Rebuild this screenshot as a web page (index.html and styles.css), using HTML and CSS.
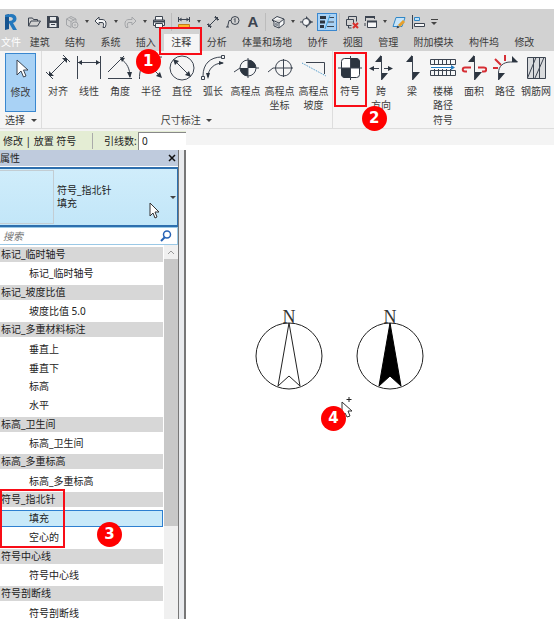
FILE: index.html
```html
<!DOCTYPE html>
<html lang="zh-CN">
<head>
<meta charset="utf-8">
<title>Revit</title>
<link rel="stylesheet" href="styles.css">
</head>
<body>
<div class="app">
  <header class="chrome">
    <div class="quick">
      <button class="logo" aria-label="Revit"><svg width="14" height="18" viewBox="0 0 14 18"><path d="M1 2l4-1v15l-4 1z" fill="#17548f"/><path d="M1 2l6-1c7 0 7 8 2 9l4 7H9L5 10V8c5 0 5-4 1-4H1z" fill="#2378bd"/></svg></button>
      <button class="q slim" aria-label="打开"><svg width="14" height="14" viewBox="0 0 14 14"><path d="M1.500 11V3h4l1 1.500h4V6M1.500 11L4 6h9.500L10.500 11z" class="ln"/></svg></button>
      <button class="q slim" aria-label="保存"><svg width="14" height="14" viewBox="0 0 14 14"><path d="M1 1h10.500L13 2.500V13H1z" fill="#3c4450"/><path d="M4 2h6v3.500H4zM3.500 8h7v4h-7z" fill="#e6e8ea"/><path d="M5 9.500h4" class="ln"/></svg></button>
      <button class="q" aria-label="同步"><svg width="14" height="14" viewBox="0 0 14 14"><path d="M1.500 4L6 1.500 11 4v3M1.500 4v6L6 12.500V6.500L1.500 4M6 6.500L11 4M4 2.500l5 2.500" class="pale"/><circle cx="10" cy="10" r="3" class="pale"/><path d="M9 10h2" class="pale"/></svg></button>
      <button class="more" aria-label="更多"></button>
      <button class="q" aria-label="放弃"><svg width="14" height="14" viewBox="0 0 14 14"><path d="M1 6l4-4v2.500h3c4 0 5 4 3 8h-2c1-3 1-5-1-5H5V10z" class="ln light"/></svg></button>
      <button class="more" aria-label="更多"></button>
      <button class="q" aria-label="重做"><svg width="14" height="14" viewBox="0 0 14 14"><path d="M13 6L9 2v2.500H6c-4 0-5 4-3 8h2c-1-3-1-5 1-5h3V10z" class="pale"/></svg></button>
      <button class="more" aria-label="更多"></button>
      <button class="q" aria-label="打印"><svg width="14" height="14" viewBox="0 0 14 14"><path d="M3.500 5V1.500h7V5M3.500 10.500h-2V5h11v5.500h-2M3.500 8.500h7v4h-7z" class="ln light"/><path d="M2 6.500h10" stroke="#3c4450" stroke-width="2"/></svg></button>
      <span class="sep"></span>
      <button class="q" aria-label="测量"><svg width="14" height="14" viewBox="0 0 14 14"><path d="M1.500 2v5M12.500 2v5M2 4.500h10" class="ln"/><path d="M4.500 2.500l-2.500 2 2.500 2zM9.500 2.500l2.500 2-2.500 2z" fill="#3c4450"/><path d="M1.500 9.500h11v3h-11z" fill="#ffb52b" stroke="#c07c18"/></svg></button>
      <button class="more" aria-label="更多"></button>
      <button class="q" aria-label="对齐尺寸标注"><svg width="14" height="14" viewBox="0 0 14 14"><path d="M3 11l8-8M1 9l4 4M9 1l4 4" class="ln"/><path d="M2 12V8l4 4zM12 2H8l4 4z" fill="#3c4450"/></svg></button>
      <button class="q" aria-label="按类别标记"><svg width="14" height="14" viewBox="0 0 14 14"><circle cx="9" cy="5.500" r="4" class="ln"/><path d="M5 5.500H3L1.500 12M8 4.500l1-1v4M0 12h3" class="ln"/></svg></button>
      <button class="q letter" aria-label="文字">A</button>
      <span class="sep"></span>
      <button class="q" aria-label="三维视图"><svg width="14" height="14" viewBox="0 0 14 14"><path d="M1 5l5-3.500L13 4v5l-5 4-5-2V7zM1 5l7 3 5-4M8 8v5" class="ln light"/><path d="M4 7.500l3 1v3l-3-1z" fill="#8d949c"/></svg></button>
      <button class="more" aria-label="更多"></button>
      <button class="q" aria-label="剖面"><svg width="14" height="14" viewBox="0 0 14 14"><path d="M6 1l6 6-6 6z" fill="#3c4450"/><circle cx="6" cy="7" r="3.500" class="ln light"/><path d="M0 7h2.500M11 7h2" class="ln"/></svg></button>
      <button class="q active" aria-label="细线"><svg width="16" height="14" viewBox="0 0 16 14"><path d="M1 2.500h6M1 7h5M1 11.500h4" stroke="#2c3540" stroke-width="3"/><path d="M10 2.500h5M9 7h6M8 11.500h7" class="ln"/><path d="M11 0L6 14" stroke="#3fa0dc"/></svg></button>
      <span class="sep"></span>
      <button class="q slim" aria-label="关闭非活动视图"><svg width="14" height="14" viewBox="0 0 14 14"><path d="M3.500 4V1.500h8v5M1.500 4.500h7V9M1.500 4.500v6h5M3.500 10.500V13h3" class="ln"/><path d="M8 8l5 5M13 8l-5 5" stroke="#d8302c" stroke-width="2"/></svg></button>
      <button class="q slim" aria-label="切换窗口"><svg width="14" height="14" viewBox="0 0 14 14"><path d="M1.500 6V1.500h9V4" class="ln"/><path d="M3.500 6.500h9v6h-9z" class="ln light"/><path d="M1 2h10M3 6.500h10" stroke="#3c4450" stroke-width="2"/><path d="M1 8v3" class="ln"/></svg></button>
      <button class="more" aria-label="更多"></button>
      <button class="q slim" aria-label="编辑"><svg width="14" height="14" viewBox="0 0 14 14"><path d="M4 2.500h9L10 11.500H1z" fill="#c7e4f8" stroke="#2f87c7"/><path d="M7 11l5-5" stroke="#e6a02e" stroke-width="3"/><path d="M4.500 13.500l1-3 2 2z" fill="#3c4450"/></svg></button>
      <button class="q slim" aria-label="对齐"><svg width="14" height="14" viewBox="0 0 14 14"><path d="M1.500 0v14" class="ln"/><path d="M3.500 2.500h5v3h-5z" fill="#bfe0f7" stroke="#2f87c7"/><path d="M3.500 8.500h10v3h-10z" class="ln light"/></svg></button>
      <button class="custom" aria-label="自定义"></button>
    </div>
    <nav class="tabs">
      <a class="file" href="#">文件</a>
      <div class="tabset">
        <a href="#">建筑</a><a href="#">结构</a><a href="#">系统</a><a href="#">插入</a><a href="#" class="current">注释<span class="mark mark-tab"></span></a><a href="#">分析</a><a href="#">体量和场地</a><a href="#">协作</a><a href="#">视图</a><a href="#">管理</a><a href="#">附加模块</a><a href="#">构件坞</a><a href="#">修改</a>
      </div>
    </nav>
    <div class="ribbon">
      <section class="group select">
        <div class="tools"><button class="tool chosen"><svg width="26" height="28" viewBox="0 0 26 28"><path d="M9 5v15l4-4 2.500 6 2.500-1-2.500-6H20z" fill="#fff" stroke="#3c4450"/></svg><span>修改</span></button></div>
        <h2>选择 <i class="caret"></i></h2>
      </section>
      <section class="group">
        <div class="tools">
          <button class="tool"><svg width="26" height="28" viewBox="0 0 26 28"><path d="M5 21L21 5M1 18l7 7M18 1l7 7" class="ln"/><path d="M4 22v-5l5 5zM22 4h-5l5 5z" class="dk"/></svg><span>对齐</span></button>
          <button class="tool"><svg width="26" height="28" viewBox="0 0 26 28"><path d="M1.500 2v23M24.500 2v23M2 8.500h22" class="ln"/><path d="M2 8.500l4-2.500v5zM24 8.500l-4-2.500v5z" class="dk"/></svg><span>线性</span></button>
          <button class="tool"><svg width="26" height="28" viewBox="0 0 26 28"><path d="M25 24.500H1M1 18L17 2M14 5c6 4 9 10 9 18" class="ln"/><path d="M13 3l5 1-3 4zM20 18h5l-2 6z" class="dk"/></svg><span>角度</span></button>
          <button class="tool"><svg width="26" height="28" viewBox="0 0 26 28"><path d="M1.500 25C1 11 9 3 24 3M8 8l15 15" class="ln"/><path d="M24 24l-6-2 4-4z" class="dk"/></svg><span>半径</span><b class="step step-tab">1</b></button>
          <button class="tool"><svg width="26" height="28" viewBox="0 0 26 28"><circle cx="13" cy="14" r="12" class="ln"/><path d="M5 6l16 16" class="ln"/><path d="M4 5l6 2-4 4zM22 23l-6-2 4-4z" class="dk"/></svg><span>直径</span></button>
          <button class="tool"><svg width="26" height="28" viewBox="0 0 26 28"><path d="M3 22C3 10 10 3 22 3M8 23c0-8 6-14 15-14" class="ln"/><path d="M1.500 22.500h3v3h-3zM21.500 1.500h3v3h-3z" class="ln light"/><path d="M6 19h4l-2 6zM19 7l5 2-5 2z" class="dk"/></svg><span>弧长</span></button>
          <button class="tool wide"><svg width="26" height="28" viewBox="0 0 26 28"><path d="M1 18l6-4h19" class="ln"/><circle cx="15" cy="14" r="8" class="ln light"/><path d="M15 14V6a8 8 0 0 1 8 8zM15 14v8a8 8 0 0 1-8-8z" class="dk"/><path d="M15 4v20" class="ln"/></svg><span>高程点</span></button>
          <button class="tool wide"><svg width="26" height="28" viewBox="0 0 26 28"><path d="M1 18l5-4h20M16.500 5v18" class="ln"/><circle cx="16.500" cy="14" r="8" class="ln"/></svg><span>高程点<br>坐标</span></button>
          <button class="tool wide"><svg width="26" height="28" viewBox="0 0 26 28"><path d="M5 8.500h18.500V20" class="ln"/><path d="M1 9l24 13" stroke="#3c91c8" stroke-dasharray="1 1"/></svg><span>高程点<br>坡度</span></button>
        </div>
        <h2>尺寸标注 <i class="caret"></i></h2>
      </section>
      <section class="group last">
        <div class="tools">
          <button class="tool"><svg width="26" height="28" viewBox="0 0 26 28"><rect x="4.500" y="4.500" width="18" height="19" rx="3" fill="#fff" stroke="#2c3540"/><path d="M13 4h7l3 3v7H13zM4 14h9v10H7l-3-3z" class="dk"/><path d="M1 14h24M13.500 2v24" class="ln"/></svg><span>符号</span><i class="mark mark-tool"></i><b class="step step-tool">2</b></button>
          <button class="tool"><svg width="26" height="28" viewBox="0 0 26 28"><path d="M13.500 2v24M2 14.500h9M16 14.500h8" class="ln"/><path d="M13 1v7H7zM14 19h6l-6 7zM1 14.500l5-2.500v5zM25 14.500l-5-2.500v5z" class="dk"/></svg><span>跨<br>方向</span></button>
          <button class="tool"><svg width="26" height="28" viewBox="0 0 26 28"><path d="M13.500 2v24" class="ln"/><path d="M13 1v7H7zM14 18h7l-7 8z" class="dk"/></svg><span>梁</span></button>
          <button class="tool"><svg width="26" height="28" viewBox="0 0 26 28"><path d="M.500 5.500h25v5H.500zM.500 16.500h25v5H.500zM4.500 5v16M8.500 5v16M12.500 5v16M16.500 5v16M20.500 5v16" class="ln light"/><path d="M1 13h22" stroke="#fff" stroke-width="4"/><path d="M1 13.500h20" stroke="#247cc0"/><path d="M25 13.500l-4-2.500v5z" fill="#247cc0"/></svg><span>楼梯<br>路径</span></button>
          <button class="tool"><svg width="26" height="28" viewBox="0 0 26 28"><path d="M13.500 2v24" class="ln"/><path d="M13 1v7H7zM14 18h7l-7 8z" class="dk"/><path d="M10 13.500H4c-3 0-3 4 0 4h2M17 13.500h6c3 0 3 4 0 4h-2" class="red"/></svg><span>面积</span></button>
          <button class="tool"><svg width="26" height="28" viewBox="0 0 26 28"><path d="M6.500 26v-7c0-7 5-11 12-11h7" class="ln"/><path d="M7 19h6l-6 7zM20 2l6 6h-6z" class="dk"/><path d="M1 14h5M3 5l6 6M13 1v6" class="red"/></svg><span>路径</span></button>
          <button class="tool"><svg width="26" height="28" viewBox="0 0 26 28"><path d="M4.500 3.500h18v21h-18z" fill="#d9dbdd" stroke="#3c4450"/><path d="M10.500 3v21M16.500 3v21M4.500 24L13 3.500M12 24L21 3.500" class="ln"/></svg><span>钢筋网</span></button>
        </div>
        <h2>符号</h2>
      </section>
    </div>
  </header>
  <main class="work">
    <aside class="side">
      <div class="options"><span class="mode">修改 | 放置 符号</span><label for="leaders">引线数:</label><input id="leaders" value="0"></div>
      <div class="dock">
        <div class="panel">
          <div class="title"><h2>属性</h2><button aria-label="关闭"><svg width="8" height="8" viewBox="0 0 8 8"><path d="M1 1l6 6M7 1L1 7" stroke="#111" stroke-width="1.500"/></svg></button></div>
          <button class="type"><span class="thumb"></span><span class="name"><span>符号_指北针</span><span>填充</span></span><i class="caret"></i>
            <svg class="pointer" width="12" height="17" viewBox="0 0 12 17"><path d="M1 1v13l3-3 2 5 2-1-2-5h4z" fill="#fff" stroke="#333"/></svg></button>
          <div class="search"><input aria-label="搜索" placeholder="搜索"><svg width="12" height="12" viewBox="0 0 12 12"><circle cx="7" cy="4.500" r="3.500" fill="none" stroke="#2763b5" stroke-width="1.500"/><path d="M5 7L1 11" stroke="#2763b5" stroke-width="2"/></svg></div>
          <div class="browser">
            <ul class="list">
              <li class="family">标记_临时轴号</li><li>标记_临时轴号</li>
              <li class="family">标记_坡度比值</li><li>坡度比值 5.0</li>
              <li class="family">标记_多重材料标注</li><li>垂直上</li><li>垂直下</li><li>标高</li><li>水平</li>
              <li class="family">标高_卫生间</li><li>标高_卫生间</li>
              <li class="family">标高_多重标高</li><li>标高_多重标高</li>
              <li class="family">符号_指北针</li><li class="picked">填充</li><li>空心的</li>
              <li class="family">符号中心线</li><li>符号中心线</li>
              <li class="family">符号剖断线</li><li>符号剖断线</li>
              <li class="mark mark-list" aria-hidden="true"></li>
              <li class="step step-list">3</li>
            </ul>
            <div class="scroll"><button aria-label="向上滚动"><svg width="8" height="6" viewBox="0 0 8 6"><path d="M1 5l3-3 3 3" fill="none" stroke="#999"/></svg></button><span class="grip"></span><span class="track"></span></div>
          </div>
        </div>
      </div>
    </aside>
    <section class="canvas">
      <svg class="north hollow" width="68" height="84" viewBox="0 0 68 84"><text x="34" y="17" class="n">N</text><circle cx="34" cy="50" r="33" class="pen"/><path d="M34 17L23 80l11-10 11 10z" class="pen"/></svg>
      <svg class="north solid" width="68" height="84" viewBox="0 0 68 84"><text x="34" y="17" class="n">N</text><circle cx="34" cy="50" r="33" class="pen"/><path d="M34 17L23 80l11-10 11 10z" fill="#000" stroke="#000"/></svg>
      <svg class="cursor" width="12" height="22" viewBox="0 0 12 22"><path d="M1 5v14l3-3 2 4 3-1-2-5h4z" fill="#fff" stroke="#333"/><path d="M8 0v5M5.500 2.500h5" stroke="#222"/></svg>
      <b class="step step-canvas">4</b>
    </section>
  </main>
</div>
</body>
</html>
```
FILE: styles.css
```css
* { box-sizing: border-box; }
body { margin: 0; background: #fff; color: #3c3c3c; font: 10px/14px "Noto Sans", "Noto Sans CJK SC", sans-serif; }
button { border: 0; padding: 0; margin: 0; background: none; font: inherit; color: inherit; }
input { font: inherit; color: inherit; border: 0; margin: 0; min-width: 0; }
h2 { margin: 0; font-size: 10px; font-weight: 400; }
a { color: inherit; text-decoration: none; }
ul { margin: 0; padding: 0; list-style: none; }
svg { display: block; flex: none; }

.app { height: 100vh; padding-top: 9px; display: flex; flex-direction: column; overflow: hidden; }
.ln { fill: none; stroke: #3c4450; }
.light { fill: #f6f7f8; }
.pale { fill: none; stroke: #a3a5a8; }
.dk { fill: #2c3540; }
.red { fill: none; stroke: #d62f35; stroke-width: 2; }

.quick { display: flex; align-items: center; height: 25px; background: #d2d2d2; }
.logo { width: 24px; padding-left: 4px; }
.q { width: 20px; height: 18px; display: flex; align-items: center; justify-content: center; }
.slim { width: 19px; }
.letter { font: bold 15px/18px "Liberation Sans", sans-serif; color: #3c4450; }
.active { background: #a9d2f5; border: 1px solid #3987cf; }
.more { width: 9px; display: flex; justify-content: center; }
.more::before, .caret { content: ""; width: 0; height: 0; border: solid transparent; border-width: 3px 3px 0; border-top-color: #444; }
.more::before { border-width: 3px 2px 0; }
.caret { display: inline-block; margin-left: 3px; vertical-align: 2px; }
.sep { width: 5px; height: 18px; background: linear-gradient(#bcbcbc, #bcbcbc) center / 1px 100% no-repeat; }
.custom { width: 14px; display: flex; flex-direction: column; align-items: center; gap: 2px; }
.custom::before { content: ""; width: 7px; height: 1px; background: #444; }
.custom::after { content: ""; border: solid transparent; border-width: 3px 3px 0; border-top-color: #444; }

.tabs { display: flex; background: #d2d2d2; line-height: 17px; }
.file { width: 22px; padding-left: 1px; color: #fff; }
.tabset { flex: 1; display: flex; padding-right: 12px; }
.tabset a { flex: 1 1 auto; text-align: center; white-space: nowrap; }
.tabset .current { position: relative; background: #f5f5f5; }

.ribbon { display: flex; background: #f5f5f5; border-bottom: 1px solid #ddd; height: 78px; }
.group { display: flex; flex-direction: column; justify-content: space-between; padding: 2px 1px 1px; border-right: 1px solid #ddd; }
.group.select { padding-left: 5px; padding-right: 4px; }
.group.last { padding-left: 2px; border-right: 0; }
.group h2 { text-align: center; white-space: nowrap; }
.tools { display: flex; }
.tool { position: relative; width: 31px; height: 59px; display: flex; flex-direction: column; align-items: center; justify-content: flex-start; padding-top: 1px; }
.tool span { white-space: nowrap; padding-top: 2px; }
.wide { width: 34px; }
.chosen { background: #a9d2f5; border: 1px solid #3987cf; }

.mark { position: absolute; border: 2px solid #f80d17; z-index: 2; }
.mark-tab { inset: -7px -3px -4px -5px; }
.mark-tool { inset: -1px -1px 5px; }
.step { position: absolute; width: 25px; height: 25px; border-radius: 50%; background: #ff0000; color: #fff; text-align: center; font: bold 15px/25px "DejaVu Sans", sans-serif; z-index: 3; }
.step-tab { left: 0; top: -4px; }
.step-tool { left: 27px; top: 53px; }

.work { flex: 1; min-height: 0; display: grid; grid-template-columns: 186px 1fr; }
.side { display: flex; flex-direction: column; min-height: 0; color: #222; }
.options { display: flex; align-items: center; height: 21px; padding-left: 3px; background: #e4edd4; border-top: 2px solid #f3f3f3; white-space: nowrap; }
.mode { width: 90px; border-right: 1px solid #aaa; line-height: 16px; }
.options label { padding-left: 11px; width: 45px; }
.options input { flex: 1; height: 18px; padding: 0 3px; background: #fff; border: 1px solid #888; border-width: 1px 0 0 1px; }
.dock { flex: 1; min-height: 0; display: flex; padding-right: 5px; background: #e9ebee; border-right: 2px solid #777; }
.panel { flex: 1; min-width: 0; display: flex; flex-direction: column; background: #fff; border-right: 1px solid #777; }
.title { display: flex; justify-content: space-between; align-items: center; height: 16px; padding-right: 2px; background: #bfcbdd; }
.type { position: relative; display: flex; align-items: center; height: 60px; margin-top: 1px; background: linear-gradient(#d0edfb, #c2e6f8); border: 1px solid #2d6fae; border-width: 2px 1px 2px 0; text-align: left; }
.thumb { width: 54px; height: 54px; border: 1px solid #c3cdd3; border-left: 0; }
.name { flex: 1; padding-left: 3px; display: flex; flex-direction: column; line-height: 13px; }
.type .caret { margin-right: 1px; }
.pointer { position: absolute; right: 16px; bottom: 6px; }
.search { display: flex; align-items: center; height: 18px; padding: 0 5px 0 3px; border: 1px solid #9bc9e6; border-left: 0; }
.search input { flex: 1; height: 16px; padding: 0; font-style: italic; background: none; }
.search input::placeholder { color: #777; }
.browser { flex: 1; min-height: 0; display: flex; }
.list { position: relative; flex: 1; display: grid; grid-template-rows: repeat(20, minmax(18px, 1fr)); margin-bottom: -3px; align-items: center; }
.list li { padding-left: 29px; line-height: 16px; white-space: nowrap; }
.list .family { padding-left: 1px; line-height: 15px; background: #d7d7d7; }
.list .picked { background: #c8e9f9; border: 1px solid #2d7fd0; border-left: 0; line-height: 15px; }
.list .mark-list { grid-row: 14 / span 3; align-self: auto; inset: -1px auto -1px 0; width: 65px; padding: 0; }
.list .step-list { grid-row: 15 / span 2; align-self: auto; left: 97px; top: 13px; padding: 0; line-height: 25px; }
.scroll { width: 14px; margin-left: 1px; display: flex; flex-direction: column; background: #f0f0f0; }
.scroll button { height: 14px; display: flex; align-items: center; justify-content: center; }
.grip { flex: 267; background: #c8c8c8; }
.track { flex: 93; }

.canvas { position: relative; border-top: 16px solid #f4f4f4; background: #fff; }
.north { position: absolute; top: 161px; }
.hollow { left: 69px; }
.solid { left: 170px; }
.pen { fill: none; stroke: #222; }
.n { font: 18px "Liberation Serif", serif; text-anchor: middle; fill: #333; }
.cursor { position: absolute; left: 155px; top: 252px; }
.step-canvas { left: 135px; top: 261px; }
```
